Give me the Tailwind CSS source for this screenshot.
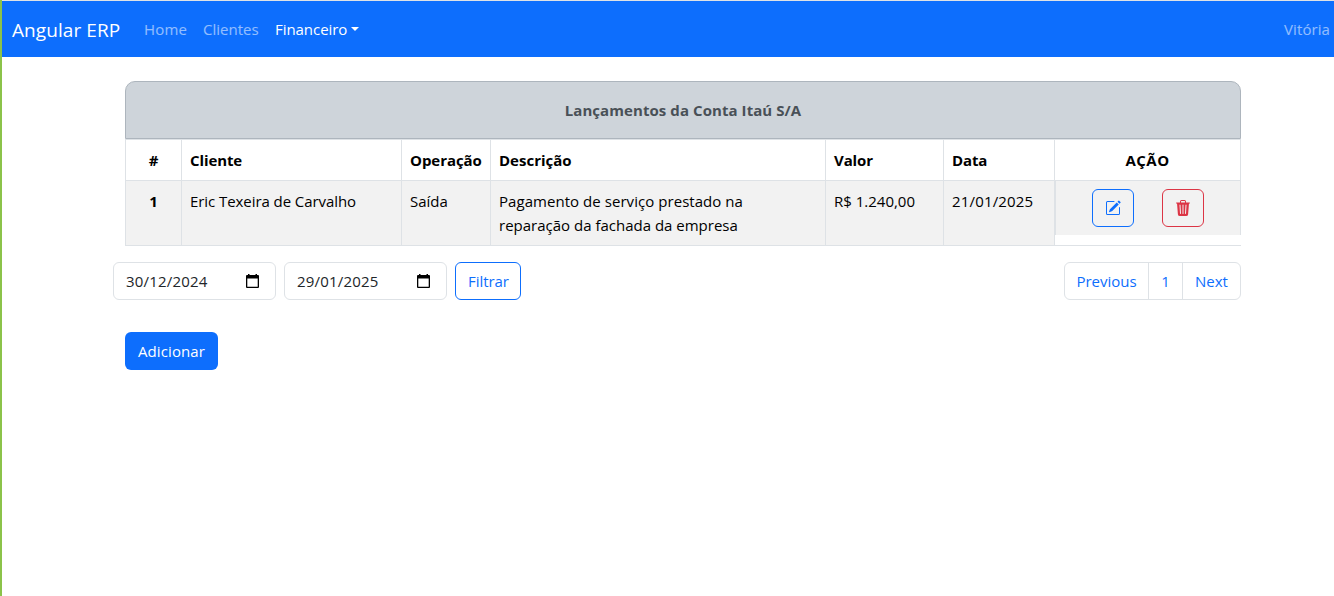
<!DOCTYPE html>
<html lang="pt-BR">
<head>
<meta charset="utf-8">
<title>Angular ERP</title>
<script src="https://cdn.jsdelivr.net/npm/@tailwindcss/browser@4"></script>
</head>
<body class="h-[596px] overflow-hidden bg-white font-['Open_Sans',sans-serif] text-[15px] leading-6 text-black">
<div class="flex h-[596px] w-[1334px] flex-col border-l-2 border-[#8bc34a]">
  <nav class="flex h-[57px] w-full shrink-0 items-center border-t border-[#dee2e6] bg-[#0d6efd] pl-[10px] pr-1 text-white/55">
    <a class="mr-6 w-[108px] whitespace-nowrap pt-[2px] text-[19px] leading-[30px] tracking-[0.07px] text-white">Angular ERP</a>
    <a class="mr-4 w-[43px] whitespace-nowrap tracking-[0.15px]">Home</a>
    <a class="mr-4 w-14 whitespace-nowrap">Clientes</a>
    <a class="flex items-center whitespace-nowrap text-white"><span class="w-[72px] tracking-[-0.05px]">Financeiro</span><i class="ml-1 border-x-[4px] border-t-[4px] border-x-transparent border-t-white"></i></a>
    <a class="ml-auto w-[46px] whitespace-nowrap tracking-[0.1px]">Vitória</a>
  </nav>

  <main class="ml-[123px] mt-6 w-[1116px]">
    <div class="flex h-[58px] items-center justify-center rounded-t-[10px] border border-[#adb5bd] bg-[#ced4da] font-bold tracking-[0.07px] text-[#495057]">Lançamentos da Conta Itaú S/A</div>
    <div class="grid grid-cols-[56px_220px_89px_335px_118px_111px_187px] whitespace-nowrap border-b border-[#dee2e6] *:border-l *:border-t *:border-[#dee2e6]">
      <div class="flex h-[41px] items-center justify-center font-bold">#</div>
      <div class="flex items-center pl-2 font-bold tracking-[-0.1px]">Cliente</div>
      <div class="flex items-center pl-2 font-bold tracking-[-0.05px]">Operação</div>
      <div class="flex items-center pl-2 font-bold">Descrição</div>
      <div class="flex items-center pl-2 font-bold tracking-[-0.1px]">Valor</div>
      <div class="flex items-center pl-2 font-bold tracking-[-0.1px]">Data</div>
      <div class="flex items-center justify-center border-r font-bold tracking-[0.5px]">AÇÃO</div>

      <div class="h-[65px] bg-[#f2f2f2] pt-2 text-center font-bold">1</div>
      <div class="bg-[#f2f2f2] pl-2 pt-2 tracking-[-0.07px]">Eric Texeira de Carvalho</div>
      <div class="bg-[#f2f2f2] pl-2 pt-2">Saída</div>
      <div class="bg-[#f2f2f2] pl-2 pt-2"><span class="tracking-[0.05px]">Pagamento de serviço prestado na</span><br>reparação da fachada da empresa</div>
      <div class="bg-[#f2f2f2] pl-2 pt-2">R$ 1.240,00</div>
      <div class="bg-[#f2f2f2] pl-2 pt-2 tracking-[0.17px]">21/01/2025</div>
      <div>
        <div class="flex h-[54px] gap-7 border-x border-[#dee2e6] bg-[#f2f2f2] pl-9 pt-2">
          <button class="flex h-[38px] w-[42px] items-center justify-center rounded-md border border-[#0d6efd] text-[#0d6efd]">
            <svg class="size-4" viewBox="0 0 16 16" fill="currentColor"><path d="M15.502 1.94a.5.5 0 0 1 0 .706L14.459 3.69l-2-2L13.502.646a.5.5 0 0 1 .707 0l1.293 1.293zm-1.75 2.456-2-2L4.939 9.21a.5.5 0 0 0-.121.196l-.805 2.414a.25.25 0 0 0 .316.316l2.414-.805a.5.5 0 0 0 .196-.12l6.813-6.814z"/><path fill-rule="evenodd" d="M1 13.5A1.5 1.5 0 0 0 2.5 15h11a1.5 1.5 0 0 0 1.5-1.5v-6a.5.5 0 0 0-1 0v6a.5.5 0 0 1-.5.5h-11a.5.5 0 0 1-.5-.5v-11a.5.5 0 0 1 .5-.5H9a.5.5 0 0 0 0-1H2.5A1.5 1.5 0 0 0 1 2.5z"/></svg>
          </button>
          <button class="flex h-[38px] w-[42px] items-center justify-center rounded-md border border-[#dc3545] text-[#dc3545]">
            <svg class="size-4" viewBox="0 0 16 16" fill="currentColor"><path d="M11 1.5v1h3.5a.5.5 0 0 1 0 1h-.538l-.853 10.66A2 2 0 0 1 11.115 16h-6.23a2 2 0 0 1-1.994-1.84L2.038 3.5H1.5a.5.5 0 0 1 0-1H5v-1A1.5 1.5 0 0 1 6.5 0h3A1.5 1.5 0 0 1 11 1.5m-5 0v1h4v-1a.5.5 0 0 0-.5-.5h-3a.5.5 0 0 0-.5.5M4.5 5.029l.5 8.5a.5.5 0 1 0 .998-.06l-.5-8.5a.5.5 0 1 0-.998.06m6.53-.528a.5.5 0 0 0-.528.47l-.5 8.5a.5.5 0 0 0 .998.058l.5-8.5a.5.5 0 0 0-.47-.528M8 4.5a.5.5 0 0 0-.5.5v8.5a.5.5 0 0 0 1 0V5a.5.5 0 0 0-.5-.5"/></svg>
          </button>
        </div>
      </div>
    </div>

    <div class="-ml-3 mt-4 flex h-[38px] items-stretch gap-2 whitespace-nowrap">
      <div class="flex w-[163px] items-center justify-between rounded-md border border-[#dee2e6] pl-3 pr-4 tracking-[0.2px] text-[#212529]">30/12/2024
        <svg class="h-[15px] w-[13px]" viewBox="0 0 13 15"><path fill="#000" fill-rule="evenodd" d="M2 0h1.5v1h6V0H11v1h1a1 1 0 0 1 1 1v11a1 1 0 0 1-1 1H1a1 1 0 0 1-1-1V2a1 1 0 0 1 1-1h1zM1.3 4.5v8.2h10.4V4.5z"/></svg></div>
      <div class="flex w-[163px] items-center justify-between rounded-md border border-[#dee2e6] pl-3 pr-4 tracking-[0.2px] text-[#212529]">29/01/2025
        <svg class="h-[15px] w-[13px]" viewBox="0 0 13 15"><path fill="#000" fill-rule="evenodd" d="M2 0h1.5v1h6V0H11v1h1a1 1 0 0 1 1 1v11a1 1 0 0 1-1 1H1a1 1 0 0 1-1-1V2a1 1 0 0 1 1-1h1zM1.3 4.5v8.2h10.4V4.5z"/></svg></div>
      <button class="flex w-[66px] items-center justify-center rounded-md border border-[#0d6efd] pl-px tracking-[-0.05px] text-[#0d6efd]">Filtrar</button>
      <div class="ml-auto flex w-[177px] rounded-md border border-[#dee2e6] text-[#0d6efd]">
        <a class="flex w-[83px] items-center justify-center">Previous</a>
        <a class="flex w-[35px] items-center justify-center border-x border-[#dee2e6]">1</a>
        <a class="flex flex-1 items-center justify-center">Next</a>
      </div>
    </div>

    <button class="mt-8 flex h-[38px] w-[93px] items-center justify-center rounded-md bg-[#0d6efd] tracking-[0.1px] text-white">Adicionar</button>
  </main>
</div>
</body>
</html>
